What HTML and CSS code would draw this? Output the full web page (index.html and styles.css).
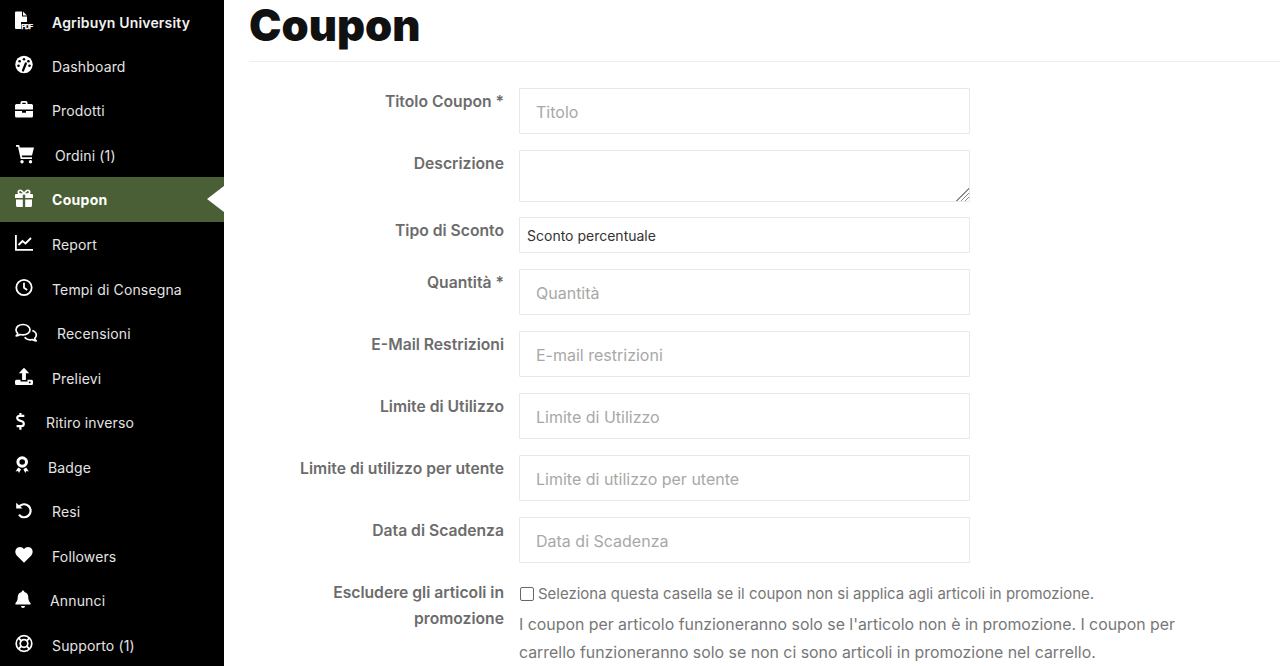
FILE: index.html
```html
<!DOCTYPE html>
<html lang="it">
<head>
    <meta charset="UTF-8">
    <meta name="viewport" content="width=device-width, initial-scale=1.0">
    <title>Coupon</title>
    <link rel="stylesheet" href="styles.css">
</head>
<body>
    <div class="layout">
        <nav class="sidebar">
            <a class="nav-item nav-item-strong" href="#">
                <svg class="nav-icon" viewBox="0 0 20 20"><path d="M0 1.500a1 1 0 0 1 1-1h6v5h5v5.500H6v7H1a1 1 0 0 1-1-1zM8 .5l4 4H8z" fill="#fff"/><text class="pdf-mark" x="6.200" y="17.700" textLength="12">PDF</text></svg>
                <span>Agribuyn University</span>
            </a>
            <a class="nav-item" href="#">
                <svg class="nav-icon" viewBox="0 0 20 20"><circle cx="9" cy="9.500" r="8.700" fill="#fff"/><path d="M8 15.500l2.800-7" stroke="#000" stroke-width="2.200" stroke-linecap="round"/><circle cx="9" cy="4.300" r="1.300"/><circle cx="4.600" cy="6.300" r="1.300"/><circle cx="3.500" cy="10.800" r="1.300"/><circle cx="13.400" cy="6.300" r="1.300"/><circle cx="14.500" cy="10.800" r="1.300"/></svg>
                <span>Dashboard</span>
            </a>
            <a class="nav-item" href="#">
                <svg class="nav-icon" viewBox="0 0 20 20"><path d="M5.500 4V2.500A1.500 1.500 0 0 1 7 1h4a1.500 1.500 0 0 1 1.500 1.500V4H16.500A1.500 1.500 0 0 1 18 5.500V9.500H0V5.500A1.500 1.500 0 0 1 1.500 4zM7.300 4h3.400V2.800H7.300zM0 11h7v1.800h4V11h7v5a1.500 1.500 0 0 1-1.500 1.500h-15A1.500 1.500 0 0 1 0 16z" fill="#fff" fill-rule="evenodd"/></svg>
                <span>Prodotti</span>
            </a>
            <a class="nav-item shift-3" href="#">
                <svg class="nav-icon" viewBox="0 0 20 20"><path d="M1 1h3.200l.6 2.500H19l-2 8H6.800l.4 1.800H17v1.700H5.700L3 2.800H1z" fill="#fff"/><circle cx="7" cy="17.700" r="1.700" fill="#fff"/><circle cx="15.500" cy="17.700" r="1.700" fill="#fff"/></svg>
                <span>Ordini (1)</span>
            </a>
            <a class="nav-item nav-item-active" href="#">
                <svg class="nav-icon" viewBox="0 0 20 20"><path d="M0 6a1 1 0 0 1 1-1h6.800v4H0zM10.200 5H17a1 1 0 0 1 1 1v3h-7.800zM1 10.500h6.800V18H2.500A1.500 1.500 0 0 1 1 16.500zM10.200 10.500H17v6a1.500 1.500 0 0 1-1.500 1.500h-5.300z" fill="#fff"/><path d="M9 5C7.500 1.500 5.500.8 4.200 1.500 2.800 2.400 3 4.500 4.800 5zM9 5c1.500-3.500 3.500-4.200 4.800-3.500 1.400.9 1.200 3-.6 3.500z" fill="none" stroke="#fff" stroke-width="1.700"/></svg>
                <span>Coupon</span>
            </a>
            <a class="nav-item" href="#">
                <svg class="nav-icon" viewBox="0 0 20 20"><path d="M.9 2v14.900H18" fill="none" stroke="#fff" stroke-width="1.800"/><path d="M3.500 12l4-4 3 2.500L16 5" fill="none" stroke="#fff" stroke-width="1.800"/></svg>
                <span>Report</span>
            </a>
            <a class="nav-item" href="#">
                <svg class="nav-icon" viewBox="0 0 20 20"><circle cx="9" cy="9.500" r="7.700" fill="none" stroke="#fff" stroke-width="1.800"/><path d="M9 4.800v5l3.200 2.200" fill="none" stroke="#fff" stroke-width="1.800"/></svg>
                <span>Tempi di Consegna</span>
            </a>
            <a class="nav-item shift-5" href="#">
                <svg class="nav-icon" viewBox="0 0 20 20"><path d="M8 1.500c-4 0-7 2.200-7 5.300 0 1.400.6 2.600 1.700 3.500-.2 1-.8 1.800-1.500 2.500 1.600 0 3-.6 4-1.300.9.300 1.800.4 2.800.4 4 0 7-2.300 7-5.100s-3-5.300-7-5.300z" fill="none" stroke="#fff" stroke-width="1.700" stroke-linejoin="round"/><path d="M17.300 7.500c2.300.8 4 2.500 4 4.600 0 1.300-.6 2.400-1.600 3.300.2 1 .8 1.700 1.500 2.400-1.600 0-3-.6-4-1.300-2.600.8-6-.1-7.500-2.300" fill="none" stroke="#fff" stroke-width="1.700" stroke-linejoin="round"/></svg>
                <span>Recensioni</span>
            </a>
            <a class="nav-item" href="#">
                <svg class="nav-icon" viewBox="0 0 20 20"><path d="M9 .8l5.200 5.500h-3.300V13H7.100V6.300H3.800z" fill="#fff"/><path d="M1.500 12.800h4v1.800h7v-1.800h4a1.500 1.500 0 0 1 1.500 1.500v2.200a1.500 1.500 0 0 1-1.500 1.500h-15A1.500 1.500 0 0 1 0 16.500v-2.200a1.500 1.500 0 0 1 1.500-1.500z" fill="#fff"/><circle cx="14.800" cy="15.400" r=".9"/></svg>
                <span>Prelievi</span>
            </a>
            <a class="nav-item shift-n6" href="#">
                <svg class="nav-icon" viewBox="0 0 20 20"><path d="M9.300 3.800H4.500C3 3.800 2.200 4.700 2.200 6c0 1.200.8 2 2 2.400l2.500.8C8 9.600 8.800 10.500 8.800 11.800c0 1.400-1 2.400-2.500 2.400H1.600M5.400 1v3M5.400 14v3.800" fill="none" stroke="#fff" stroke-width="2.200"/></svg>
                <span>Ritiro inverso</span>
            </a>
            <a class="nav-item shift-n4" href="#">
                <svg class="nav-icon" viewBox="0 0 20 20"><circle cx="7.200" cy="6" r="4.300" fill="none" stroke="#fff" stroke-width="3"/><path d="M3.200 11.500L.6 15.500l2.400-.4 1 2 2-3.800zM11.200 11.500l2.600 4-2.400-.4-1 2-2-3.800z" fill="#fff"/></svg>
                <span>Badge</span>
            </a>
            <a class="nav-item" href="#">
                <svg class="nav-icon" viewBox="0 0 20 20"><path d="M4.200 5.500A6.500 6.500 0 1 1 4 13.800" fill="none" stroke="#fff" stroke-width="2.200"/><path d="M1.200 1.800l6.300 5.700H1.200z" fill="#fff"/></svg>
                <span>Resi</span>
            </a>
            <a class="nav-item" href="#">
                <svg class="nav-icon" viewBox="0 0 20 20"><path d="M9 17.800L1.700 10.400C-.5 8.100.1 4 2.700 2.600c2.300-1.200 4.700-.5 6.300 1.500 1.600-2 4-2.700 6.300-1.500 2.600 1.400 3.200 5.500 1 7.800z" fill="#fff"/></svg>
                <span>Followers</span>
            </a>
            <a class="nav-item shift-n2" href="#">
                <svg class="nav-icon" viewBox="0 0 20 20"><path d="M8 .5c.8 0 1.300.6 1.300 1.400 2.600.6 4 2.600 4 5.300 0 3 .8 4.300 2.300 6v1.300H.4v-1.300c1.500-1.700 2.300-3 2.300-6 0-2.700 1.400-4.700 4-5.300C6.700 1.100 7.200.5 8 .5z" fill="#fff"/><path d="M6 16h4a2 2 0 0 1-4 0z" fill="#fff"/></svg>
                <span>Annunci</span>
            </a>
            <a class="nav-item" href="#">
                <svg class="nav-icon" viewBox="0 0 20 20"><circle cx="9" cy="9.500" r="7.800" fill="none" stroke="#fff" stroke-width="1.700"/><circle cx="9" cy="9.500" r="3.800" fill="none" stroke="#fff" stroke-width="1.700"/><path d="M3.600 4.100l3 3M14.400 4.100l-3 3M3.600 14.900l3-3M14.400 14.900l-3-3" stroke="#fff" stroke-width="2"/></svg>
                <span>Supporto (1)</span>
            </a>
        </nav>

        <main class="content">
            <h1 class="page-title">Coupon</h1>
            <form class="coupon-form">
                <div class="form-row">
                    <label for="titolo">Titolo Coupon *</label>
                    <input class="field" type="text" id="titolo" placeholder="Titolo">
                </div>
                <div class="form-row form-row-tight">
                    <label for="descrizione">Descrizione</label>
                    <textarea class="field field-area" id="descrizione"></textarea>
                </div>
                <div class="form-row">
                    <label for="tipo">Tipo di Sconto</label>
                    <select class="field field-select" id="tipo">
                        <option>Sconto percentuale</option>
                    </select>
                </div>
                <div class="form-row">
                    <label for="quantita">Quantità *</label>
                    <input class="field" type="text" id="quantita" placeholder="Quantità">
                </div>
                <div class="form-row">
                    <label for="email">E-Mail Restrizioni</label>
                    <input class="field" type="text" id="email" placeholder="E-mail restrizioni">
                </div>
                <div class="form-row">
                    <label for="limite">Limite di Utilizzo</label>
                    <input class="field" type="text" id="limite" placeholder="Limite di Utilizzo">
                </div>
                <div class="form-row">
                    <label for="limite_utente">Limite di utilizzo per utente</label>
                    <input class="field" type="text" id="limite_utente" placeholder="Limite di utilizzo per utente">
                </div>
                <div class="form-row">
                    <label for="scadenza">Data di Scadenza</label>
                    <input class="field" type="text" id="scadenza" placeholder="Data di Scadenza">
                </div>
                <div class="form-row">
                    <label for="promo">Escludere gli articoli in promozione</label>
                    <div class="promo-box">
                        <div class="check-line">
                            <input class="check" type="checkbox" id="promo">
                            <span>Seleziona questa casella se il coupon non si applica agli articoli in promozione.</span>
                        </div>
                        <p class="help">I coupon per articolo funzioneranno solo se l'articolo non è in promozione. I coupon per carrello funzioneranno solo se non ci sono articoli in promozione nel carrello.</p>
                    </div>
                </div>
            </form>
        </main>
    </div>
</body>
</html>
```

FILE: styles.css
```css
* {
    box-sizing: border-box;
}
body {
    margin: 0;
    overflow: hidden;
    font-family: Inter, "Liberation Sans", sans-serif;
    background: #fff;
}
.layout {
    display: flex;
    height: 666px;
}

/* sidebar */
.sidebar {
    width: 224px;
    flex-shrink: 0;
    background: #000;
    overflow: hidden;
}
.nav-item {
    position: relative;
    display: flex;
    align-items: center;
    height: 44.550px;
    padding-left: 15px;
    color: #e4e4e4;
    font-size: 14px;
    letter-spacing: .15px;
    text-decoration: none;
}
.nav-item:first-child {
    height: 44.020px;
}
.nav-item-strong {
    color: #f2f2f2;
    font-weight: 600;
    letter-spacing: .17px;
}
.nav-item-active {
    background: #4a5f36;
    box-shadow: 0 -1px 0 #4a5f36;
    color: #fff;
    font-weight: 700;
    letter-spacing: .3px;
}
.nav-item-active::after {
    content: "";
    position: absolute;
    right: 0;
    top: 8.500px;
    border-style: solid;
    border-width: 13.500px 17px 13.500px 0;
    border-color: transparent #fff transparent transparent;
}
.nav-icon {
    width: 20px;
    height: 20px;
    margin-right: 17px;
    margin-top: -2px;
    overflow: visible;
    flex-shrink: 0;
}
.pdf-mark {
    font-family: "Liberation Sans", sans-serif;
    font-size: 7px;
    font-weight: 700;
    fill: #fff;
    stroke: #fff;
    stroke-width: .25px;
}
.shift-3 span { margin-left: 3px; }
.shift-5 span { margin-left: 5px; }
.shift-n6 span { margin-left: -6px; }
.shift-n4 span { margin-left: -4px; }
.shift-n2 span { margin-left: -2px; }

/* main */
.content {
    flex: 1;
    min-width: 0;
    padding-left: 25px;
}
.page-title {
    height: 61px;
    margin: 0;
    font-size: 43.500px;
    line-height: 50px;
    font-weight: 900;
    color: #111;
}
.coupon-form {
    border-top: 1px solid #eee;
    padding-top: 26px;
}
.form-row {
    display: flex;
    align-items: flex-start;
    gap: 15px;
    margin-bottom: 16px;
}
.form-row-tight {
    margin-bottom: 15px;
}
.form-row label {
    width: 255px;
    flex-shrink: 0;
    padding-top: 1px;
    text-align: right;
    font-size: 15.700px;
    line-height: 26px;
    font-weight: 600;
    color: #6c6c6c;
}
.field {
    display: block;
    width: 451px;
    height: 46px;
    padding: 2px 16px 0;
    border: 1px solid #e8e8e8;
    border-radius: 1px;
    background: #fff;
    font-family: inherit;
    font-size: 16px;
    color: #333;
}
.field::placeholder {
    color: #a8a8a8;
    opacity: 1;
}
.field-area {
    height: 52px;
    padding: 8px 16px;
}
.field-area::-webkit-resizer {
    background:
        linear-gradient(to bottom right, #fff 50%, transparent 50%),
        repeating-linear-gradient(135deg, #8a8a8a 0 1px, #fff 1px 3px);
}
.field-select {
    height: 36px;
    padding: 1px 7px 0;
    appearance: none;
    font-size: 14px;
    color: #333;
}
.promo-box {
    width: 660px;
}
.check-line {
    display: flex;
    align-items: center;
    gap: 4px;
    height: 28px;
    padding-top: 1px;
    color: #777;
    font-size: 14.970px;
}
.check {
    width: 14px;
    height: 14px;
    margin: 0 0 0 1px;
    appearance: none;
    border: 1.500px solid #666;
    border-radius: 2px;
    background: #fff;
}
.help {
    margin: 4px 0 0;
    font-size: 15.870px;
    line-height: 28px;
    color: #777;
}
```
